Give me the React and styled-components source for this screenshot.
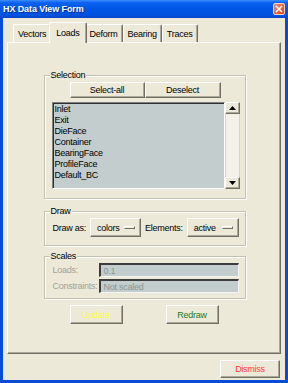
import React from "react";
import styled, { createGlobalStyle } from "styled-components";

const GlobalStyle = createGlobalStyle`
  html, body {
    margin: 0;
    padding: 0;
    background: #ece9d8;
  }
  body {
    font-family: "Liberation Sans", Arial, sans-serif;
    font-size: 9px;
    letter-spacing: -0.25px;
    color: #000;
  }
`;

const raised = `
  border: 1px solid;
  border-color: #ffffff #716f64 #716f64 #ffffff;
  box-shadow: inset -1px -1px 0 #aca899;
`;

const sunken = `
  border: 1px solid;
  border-color: #808080 #ffffff #ffffff #808080;
  box-shadow: inset 1px 1px 0 #303030;
`;

const Window = styled.div`
  width: 288px;
  height: 383px;
  display: flex;
  flex-direction: column;
`;

const TitleBar = styled.div`
  height: 18px;
  flex: none;
  display: flex;
  align-items: center;
  justify-content: space-between;
  padding: 0 3px 0 3px;
  box-sizing: border-box;
  background: linear-gradient(180deg, #3d8dff 0%, #0b62ef 15%, #0055e5 50%, #0052df 85%, #0843c4 100%);
`;

const Title = styled.span`
  color: #fff;
  font-weight: bold;
  font-size: 9px;
  letter-spacing: -0.1px;
  text-shadow: 1px 1px 0 #0a2a8c;
`;

const CloseBox = styled.div`
  width: 12px;
  height: 12px;
  box-sizing: border-box;
  border: 1px solid #f4d2c8;
  border-radius: 2px;
  background: linear-gradient(135deg, #f08a6c, #d9431f);
  display: flex;
  align-items: center;
  justify-content: center;
`;

const Body = styled.div`
  flex: 1;
  display: flex;
  flex-direction: column;
  background: #ece9d8;
  border: 3px solid #0a4bd6;
  border-top: none;
  padding: 4px 4px 2px 4px;
`;

const TabRow = styled.div`
  display: flex;
  align-items: flex-end;
  height: 20px;
  padding-left: 6px;
`;

const Tab = styled.div`
  box-sizing: border-box;
  height: ${(p) => (p.$active ? 21 : 18)}px;
  margin: ${(p) => (p.$active ? "0 -2px -1px" : "0")};
  padding: 0 ${(p) => (p.$active ? 6 : 4)}px;
  display: flex;
  align-items: center;
  background: #ece9d8;
  border-top: 1px solid #fff;
  border-left: 1px solid #fff;
  border-right: 1px solid #716f64;
  border-radius: 2px 2px 0 0;
  box-shadow: inset -1px 0 0 #aca899;
  position: relative;
  z-index: ${(p) => (p.$active ? 2 : 0)};
`;

const Panel = styled.div`
  flex: 1;
  display: flex;
  flex-direction: column;
  align-items: center;
  border: 1px solid;
  border-color: #fff #716f64 #716f64 #fff;
  box-shadow: inset -1px -1px 0 #aca899;
  padding-top: 32px;
  position: relative;
  z-index: 1;
`;

const Group = styled.div`
  box-sizing: border-box;
  width: 202px;
  margin: ${(p) => p.$mt || 0}px 0 0 1px;
  padding: ${(p) => p.$pad};
  border: 1px solid #c4c1b0;
  box-shadow: inset 1px 1px 0 #fff, 1px 1px 0 #fff;
`;

const GroupLabel = styled.div`
  width: fit-content;
  margin: -6px 0 2px ${(p) => p.$ml || -3}px;
  padding: 0 1px;
  line-height: 10px;
  background: #ece9d8;
`;

const ButtonRow = styled.div`
  display: flex;
  justify-content: center;
`;

const Btn = styled.button`
  box-sizing: border-box;
  width: ${(p) => p.$w}px;
  height: ${(p) => p.$h || 16}px;
  padding: 0;
  background: #ece9d8;
  color: ${(p) => p.$color || "#000"};
  font: inherit;
  letter-spacing: inherit;
  ${raised}
`;

const ListArea = styled.div`
  display: flex;
  width: 188px;
  height: 87px;
  margin-top: 4px;
`;

const List = styled.div`
  flex: 1;
  box-sizing: border-box;
  background: #c3cdcd;
  padding: 1px 0 0 2px;
  ${sunken}
`;

const Item = styled.div`
  height: 11px;
  line-height: 11px;
  white-space: nowrap;
`;

const ScrollBar = styled.div`
  width: 15px;
  display: flex;
  flex-direction: column;
  background: #f3f1e8;
`;

const ScrollBtn = styled.div`
  box-sizing: border-box;
  height: 12px;
  display: flex;
  align-items: center;
  justify-content: center;
  background: #ece9d8;
  ${raised}
`;

const Trough = styled.div`
  flex: 1;
  border-left: 1px solid #d8d5c6;
  border-right: 1px solid #d8d5c6;
`;

const DrawRow = styled.div`
  display: flex;
  align-items: center;
  gap: 4px;
  white-space: nowrap;
`;

const OptionMenu = styled.button`
  box-sizing: border-box;
  width: ${(p) => p.$w}px;
  height: 19px;
  display: flex;
  align-items: center;
  justify-content: space-between;
  padding: 0 5px 0 6px;
  background: #ece9d8;
  font: inherit;
  letter-spacing: inherit;
  color: #000;
  ${raised}
`;

const Indicator = styled.span`
  width: 11px;
  height: 3px;
  box-sizing: border-box;
  border: 1px solid;
  border-color: #fff #716f64 #716f64 #fff;
`;

const FieldRow = styled.div`
  display: flex;
  align-items: center;
  margin-top: ${(p) => p.$mt || 0}px;
  white-space: nowrap;
`;

const FieldLabel = styled.span`
  width: 46px;
  color: #a3a196;
`;

const Field = styled.div`
  box-sizing: border-box;
  width: 140px;
  height: 14px;
  line-height: 12px;
  padding-left: 3px;
  background: #c3cdcd;
  color: #8d9494;
  border-top: 2px solid #3c3c3c;
  border-left: 2px solid #3c3c3c;
  border-bottom: 1px solid #f4f4f4;
  border-right: 1px solid #f4f4f4;
`;

const ActionRow = styled.div`
  display: flex;
  justify-content: center;
  gap: 43px;
  margin-top: 6px;
`;

const Footer = styled.div`
  display: flex;
  justify-content: flex-end;
  padding: 6px 1px 0 0;
`;

const Arrow = ({ up }) => (
  <svg width="7" height="4" viewBox="0 0 7 4">
    <polygon points={up ? "3.5,0 7,4 0,4" : "0,0 7,0 3.5,4"} fill="#000" />
  </svg>
);

const items = ["Inlet", "Exit", "DieFace", "Container", "BearingFace", "ProfileFace", "Default_BC"];
const tabs = ["Vectors", "Loads", "Deform", "Bearing", "Traces"];

export default function App() {
  return (
    <Window>
      <GlobalStyle />
      <TitleBar>
        <Title>HX Data View Form</Title>
        <CloseBox>
          <svg width="8" height="8" viewBox="0 0 8 8">
            <path d="M1 1 L7 7 M7 1 L1 7" stroke="#fff" strokeWidth="1.6" />
          </svg>
        </CloseBox>
      </TitleBar>
      <Body>
        <TabRow>
          {tabs.map((t) => (
            <Tab key={t} $active={t === "Loads"}>
              {t}
            </Tab>
          ))}
        </TabRow>
        <Panel>
          <Group $pad="0 6px 9px 7px">
            <GroupLabel $ml={-2}>Selection</GroupLabel>
            <ButtonRow>
              <Btn $w={75}>Select-all</Btn>
              <Btn $w={76}>Deselect</Btn>
            </ButtonRow>
            <ListArea>
              <List>
                {items.map((i) => (
                  <Item key={i}>{i}</Item>
                ))}
              </List>
              <ScrollBar>
                <ScrollBtn>
                  <Arrow up />
                </ScrollBtn>
                <Trough />
                <ScrollBtn>
                  <Arrow />
                </ScrollBtn>
              </ScrollBar>
            </ListArea>
          </Group>

          <Group $mt={12} $pad="0 6px 8px 8px">
            <GroupLabel>Draw</GroupLabel>
            <DrawRow>
              <span>Draw as:</span>
              <OptionMenu $w={53}>
                colors
                <Indicator />
              </OptionMenu>
              <span>Elements:</span>
              <OptionMenu $w={54}>
                active
                <Indicator />
              </OptionMenu>
            </DrawRow>
          </Group>

          <Group $mt={10} $pad="0 6px 5px 8px">
            <GroupLabel>Scales</GroupLabel>
            <FieldRow>
              <FieldLabel>Loads:</FieldLabel>
              <Field>0.1</Field>
            </FieldRow>
            <FieldRow $mt={2}>
              <FieldLabel>Constraints:</FieldLabel>
              <Field>Not scaled</Field>
            </FieldRow>
          </Group>

          <ActionRow>
            <Btn $w={53} $h={19} $color="#ffff3a">
              Update
            </Btn>
            <Btn $w={53} $h={19} $color="#1f7a1f">
              Redraw
            </Btn>
          </ActionRow>
        </Panel>
        <Footer>
          <Btn $w={60} $h={18} $color="#ff3b3b">
            Dismiss
          </Btn>
        </Footer>
      </Body>
    </Window>
  );
}
